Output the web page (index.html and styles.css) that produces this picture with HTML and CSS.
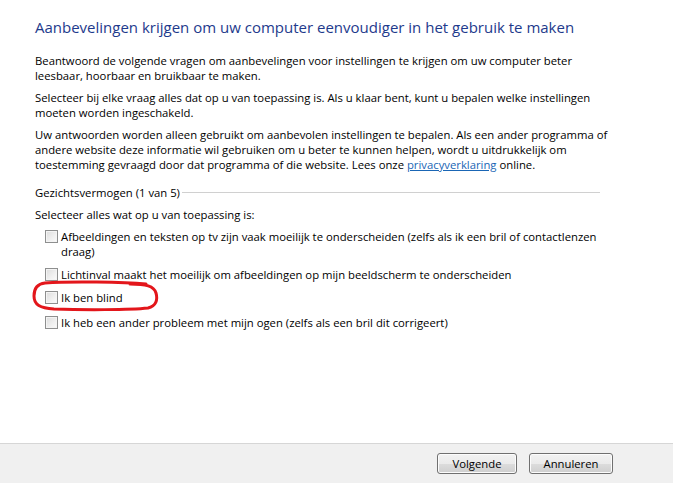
FILE: index.html
```html
<!DOCTYPE html>
<html lang="nl">
<head>
<meta charset="utf-8">
<title>Aanbevelingen</title>
<link rel="stylesheet" href="styles.css">
</head>
<body>
<div class="page">
  <main class="content">
    <h1 class="title">Aanbevelingen krijgen om uw computer eenvoudiger in het gebruik te maken</h1>
    <p class="para">Beantwoord de volgende vragen om aanbevelingen voor instellingen te krijgen om uw computer beter leesbaar, hoorbaar en bruikbaar te maken.</p>
    <p class="para">Selecteer bij elke vraag alles dat op u van toepassing is. Als u klaar bent, kunt u bepalen welke instellingen moeten worden ingeschakeld.</p>
    <p class="para">Uw antwoorden worden alleen gebruikt om aanbevolen instellingen te bepalen. Als een ander programma of andere website deze informatie wil gebruiken om u beter te kunnen helpen, wordt u uitdrukkelijk om toestemming gevraagd door dat programma of die website. Lees onze <a class="link" href="#">privacyverklaring</a> online.</p>

    <div class="group-head">
      <span class="group-label">Gezichtsvermogen (1 van 5)</span>
      <span class="group-rule"></span>
    </div>
    <p class="prompt">Selecteer alles wat op u van toepassing is:</p>

    <ul class="options">
      <li class="option"><span class="box"></span><span class="opt-text">Afbeeldingen en teksten op tv zijn vaak moeilijk te onderscheiden (zelfs als ik een bril of contactlenzen draag)</span></li>
      <li class="option"><span class="box"></span><span class="opt-text">Lichtinval maakt het moeilijk om afbeeldingen op mijn beeldscherm te onderscheiden</span></li>
      <li class="option marked"><span class="box"></span><span class="opt-text">Ik ben blind</span>
        <svg class="circle" width="128" height="32" viewBox="0 0 128 32" aria-hidden="true">
          <path d="M114 4 C 92 2, 38 1, 13 3 C 4 4, 2 10, 2 16 C 2 25, 8 28, 22 29 C 50 30, 98 30, 116 28 C 124 26, 126 20, 124 13 C 122 6, 114 4, 98 4" fill="none" stroke="#e3161b" stroke-width="3" stroke-linecap="round"/>
        </svg>
      </li>
      <li class="option"><span class="box"></span><span class="opt-text">Ik heb een ander probleem met mijn ogen (zelfs als een bril dit corrigeert)</span></li>
    </ul>
  </main>
  <footer class="footer">
    <button class="btn btn-next" type="button">Volgende</button>
    <button class="btn btn-cancel" type="button">Annuleren</button>
  </footer>
</div>
</body>
</html>
```

FILE: styles.css
```css
html, body {
  margin: 0;
  padding: 0;
  background: #ffffff;
}

body {
  font-family: "Open Sans", "Noto Sans", "Liberation Sans", sans-serif;
  font-size: 11.3px;
  color: #000000;
}

.page {
  display: flex;
  flex-direction: column;
  height: 483px;
  overflow: hidden;
}

.content {
  flex: 1;
  padding: 17px 54px 0 35px;
}

.title {
  margin: 0 0 16px 0;
  font-size: 15px;
  font-weight: 400;
  line-height: 20px;
  color: #1e3a8c;
}

.para {
  margin: 0 0 7px 0;
  line-height: 15px;
}

.link {
  color: #1a66b5;
  text-decoration: underline;
}

.group-head {
  display: flex;
  align-items: center;
  margin-top: 13px;
  gap: 2px;
  width: 565px;
}

.group-label {
  line-height: 15px;
  white-space: nowrap;
}

.group-rule {
  flex: 1;
  height: 1px;
  background: #d0d0d0;
}

.prompt {
  margin: 7px 0 0 0;
  line-height: 15px;
}

.options {
  list-style: none;
  margin: 7px 0 0 0;
  padding: 0 0 0 10px;
}

.option {
  position: relative;
  display: flex;
  align-items: flex-start;
  line-height: 15px;
  margin-bottom: 8px;
}

.option.marked {
  margin-bottom: 10px;
}

.box {
  flex: none;
  width: 11px;
  height: 11px;
  margin: 1px 3px 0 0;
  border: 1px solid #8e8f8f;
  background: linear-gradient(135deg, #dcdcdc 0%, #f0f0f0 60%, #fbfbfb 100%);
  box-shadow: inset 0 0 0 1px #f4f4f4;
}

.circle {
  position: absolute;
  left: -13px;
  top: -10px;
  pointer-events: none;
}

.footer {
  flex: none;
  height: 39px;
  border-top: 1px solid #d6d6d6;
  background: #f0f0f0;
  display: flex;
  justify-content: flex-end;
  align-items: center;
  gap: 12px;
  padding-right: 60px;
}

.btn {
  height: 21px;
  padding: 0;
  font-family: inherit;
  font-size: 11.3px;
  color: #000;
  border: 1px solid #707070;
  border-radius: 3px;
  background: linear-gradient(to bottom, #f2f2f2 0%, #ebebeb 50%, #dddddd 51%, #cfcfcf 100%);
  box-shadow: inset 0 0 0 1px #fcfcfc;
}

.btn-next {
  width: 80px;
}

.btn-cancel {
  width: 84px;
}
```
